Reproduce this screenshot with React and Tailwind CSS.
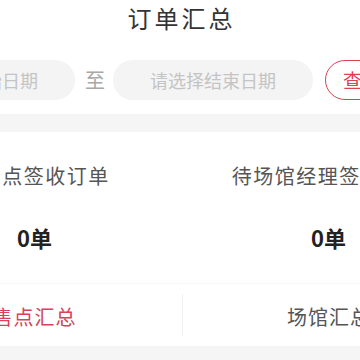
import React from 'react';

const font = { fontFamily: '"Noto Sans CJK SC", "Noto Sans", sans-serif' };

const stats = [
    { label: '待售点签收订单', value: '0单' },
    { label: '待场馆经理签收订单', value: '0单' }
];

const App = () => {
    return (
        <div className="w-[360px] h-[360px] overflow-hidden bg-white flex flex-col" style={font}>
            {/* Header */}
            <div className="h-[36px] shrink-0 text-center pl-[3px] text-[24px] leading-[36px] tracking-[3px] text-[#333]">订单汇总</div>

            {/* Date range filter */}
            <div className="mt-[24px] h-[40px] shrink-0 flex items-center ml-[-125px] whitespace-nowrap">
                <div className="w-[200px] h-[40px] shrink-0 rounded-full bg-[#f4f4f4] flex items-center justify-center text-[18px] text-[#c4c4c4]">请选择开始日期</div>
                <span className="ml-[10px] mr-[8px] w-[20px] shrink-0 text-[20px] leading-none text-[#a8a8a8]">至</span>
                <div className="w-[200px] h-[40px] shrink-0 rounded-full bg-[#f4f4f4] flex items-center justify-center text-[18px] text-[#c4c4c4]">请选择结束日期</div>
                <button className="ml-[12px] h-[40px] shrink-0 px-[17px] rounded-full border-[1.5px] border-[#d8434f] text-[19px] text-[#d8434f]">查询</button>
            </div>

            <div className="mt-[14px] h-[18px] shrink-0 bg-[#f5f5f5]" />

            {/* Pending counts */}
            <div className="shrink-0 grid grid-cols-[295px_293px] ml-[-113px] w-[588px] h-[151px]">
                {stats.map((s, i) => (
                    <div key={i} className="flex flex-col items-center pt-[30px] whitespace-nowrap">
                        <div className="text-[20px] leading-[28px] tracking-[1.5px] text-[#555]">{s.label}</div>
                        <div className="mt-[33px] text-[22px] leading-[28px] font-bold text-[#222]">{s.value}</div>
                    </div>
                ))}
            </div>

            {/* Tabs */}
            <div className="shrink-0 border-t border-[#f6f6f6] grid grid-cols-[295px_1px_292px] ml-[-113px] w-[588px] h-[63px] items-center">
                <div className="text-center pt-[4px] text-[20px] leading-[28px] tracking-[1px] text-[#d6435a] whitespace-nowrap">售点汇总</div>
                <div className="w-px h-[42px] bg-[#f0f0f0]" />
                <div className="text-center pt-[4px] text-[20px] leading-[28px] tracking-[1px] text-[#555] whitespace-nowrap">场馆汇总</div>
            </div>

            <div className="flex-1 bg-[#f5f5f5]" />
        </div>
    );
};

export default App;
